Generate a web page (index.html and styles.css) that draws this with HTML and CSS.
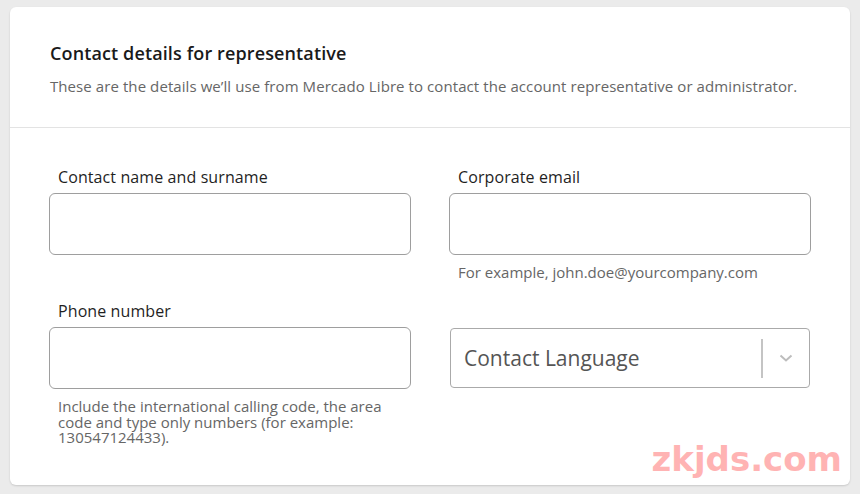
FILE: index.html
```html
<!DOCTYPE html>
<html>
	<head>
		<meta charset="UTF-8">
		<title>Contact details</title>
		<link rel="stylesheet" href="styles.css">
	</head>
	<body>
		<div class="card">
			<div class="card-head">
				<h2 class="title">Contact details for representative</h2>
				<p class="subtitle">These are the details we’ll use from Mercado Libre to contact the account representative or administrator.</p>
			</div>
			<div class="form">
				<div class="field">
					<label class="label">Contact name and surname</label>
					<input class="input" type="text">
				</div>
				<div class="field">
					<label class="label">Corporate email</label>
					<input class="input" type="email">
					<p class="help">For example, john.doe@yourcompany.com</p>
				</div>
				<div class="field">
					<label class="label">Phone number</label>
					<input class="input" type="tel">
					<p class="help help-phone">Include the international calling code, the area code and type only numbers (for example: 130547124433).</p>
				</div>
				<div class="field">
					<div class="select">
						<span class="select-text">Contact Language</span>
						<span class="select-sep"></span>
						<svg class="select-arrow" width="14" height="8" viewBox="0 0 14 8">
							<path d="M1.5 1.5 L7 6.5 L12.5 1.5" fill="none" stroke="#bdbdbd" stroke-width="2"/>
						</svg>
					</div>
				</div>
			</div>
			<div class="watermark">zkjds.com</div>
		</div>
	</body>
</html>
```

FILE: styles.css
```css
body,div,h2,p{
	margin: 0;
	padding: 0;
}
body{
	background: #ebebeb;
	font-family: "Open Sans", "Liberation Sans", sans-serif;
	color: #1f1f1f;
}

.card{
	position: relative;
	width: 840px;
	height: 478px;
	margin: 7px 10px;
	background: #fff;
	border-radius: 6px;
	box-shadow: 0 1px 2px rgba(0,0,0,0.15);
	box-sizing: border-box;
}
.card-head{
	padding: 35px 40px 32px;
	border-bottom: 1px solid #e3e3e3;
}
.title{
	font-size: 18px;
	line-height: 22px;
	font-weight: 600;
	letter-spacing: 0.12px;
	color: #1a1a1a;
}
.subtitle{
	margin-top: 13px;
	font-size: 15px;
	line-height: 18px;
	letter-spacing: 0.08px;
	color: #666;
}

.form{
	display: grid;
	grid-template-columns: 362px 362px;
	column-gap: 38px;
	row-gap: 22px;
	padding: 40px 39px 0;
}
.field{
	display: flex;
	flex-direction: column;
}
.label{
	margin: 0 0 7px 9px;
	font-size: 16px;
	line-height: 18px;
	letter-spacing: 0.1px;
	color: #1f1f1f;
}
.input{
	height: 62px;
	margin: 0;
	border: 1px solid #9e9e9e;
	border-radius: 6px;
	box-sizing: border-box;
	font: inherit;
}
.help{
	margin: 9px 9px 0;
	font-size: 15px;
	line-height: 16px;
	color: #666;
}
.help-phone{
	margin-top: 10px;
	line-height: 15.5px;
	padding-right: 10px;
}

.select{
	display: flex;
	align-items: center;
	height: 60px;
	margin: 26px 1px 0;
	padding: 0 14px 0 13px;
	border: 1px solid #aaa;
	border-radius: 4px;
	box-sizing: border-box;
}
.select-text{
	flex: 1;
	font-size: 21px;
	color: #555;
}
.select-sep{
	width: 2px;
	height: 39px;
	background: #c4c4c4;
}
.select-arrow{
	margin: 0 2px 0 16px;
}

.watermark{
	position: absolute;
	right: 8px;
	bottom: 6px;
	font-family: "DejaVu Sans", sans-serif;
	font-size: 34px;
	font-weight: bold;
	color: #ffb3b3;
}
```
